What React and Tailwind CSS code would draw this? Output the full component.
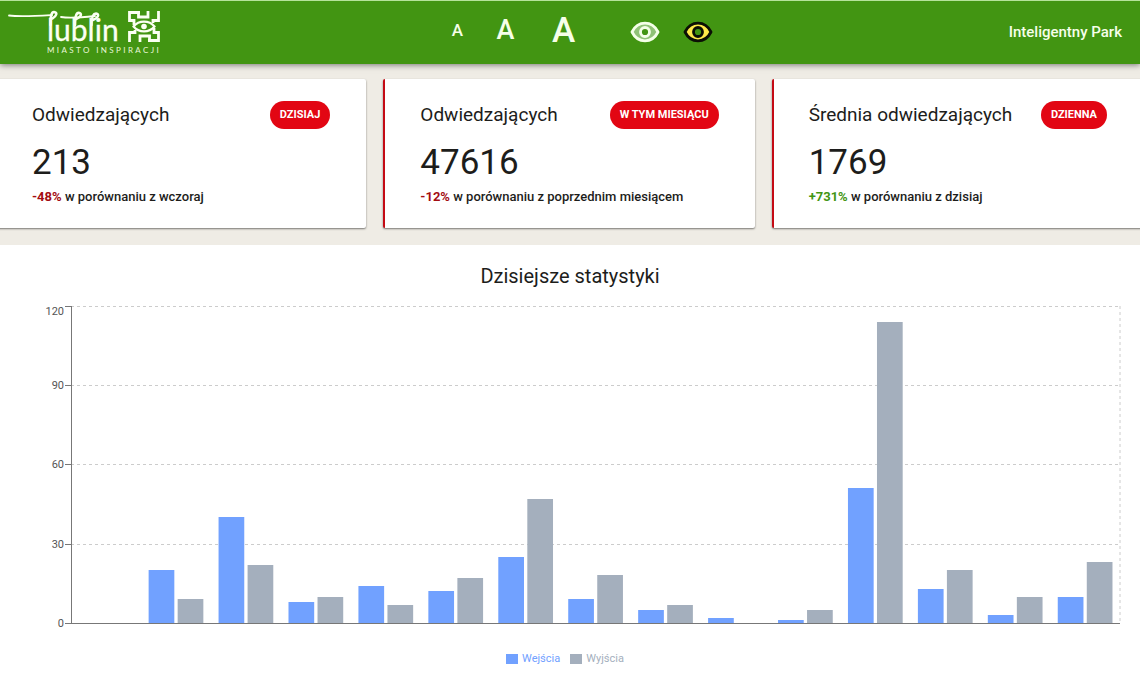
const cards = [
  {
    title: "Odwiedzających",
    badge: "DZISIAJ",
    value: "213",
    change: "-48%",
    changeColor: "text-[#a30d12]",
    compare: "w porównaniu z wczoraj",
  },
  {
    title: "Odwiedzających",
    badge: "W TYM MIESIĄCU",
    value: "47616",
    change: "-12%",
    changeColor: "text-[#a30d12]",
    compare: "w porównaniu z poprzednim miesiącem",
  },
  {
    title: "Średnia odwiedzających",
    badge: "DZIENNA",
    value: "1769",
    change: "+731%",
    changeColor: "text-[#429512]",
    compare: "w porównaniu z dzisiaj",
  },
];

// [wejścia, wyjścia]
const stats = [
  [0, 0],
  [20, 9],
  [40, 22],
  [8, 10],
  [14, 7],
  [12, 17],
  [25, 47],
  [9, 18],
  [5, 7],
  [2, 0],
  [1, 5],
  [51, 114],
  [13, 20],
  [3, 10],
  [10, 23],
];

const MAX = 120;
const PLOT_HEIGHT = 317;
const ticks = [0, 30, 60, 90, 120];

const toY = (value) => PLOT_HEIGHT - Math.round((value / MAX) * PLOT_HEIGHT);
const toX = (index) => `${(index / stats.length) * 100}%`;

function Logo() {
  return (
    <svg width="164" height="63" viewBox="0 0 164 63" fill="none" role="img" aria-label="Lublin Miasto Inspiracji">
      <g stroke="#fbfff2" strokeLinecap="round">
        <path d="M9 14.500C21 16 36 15 52 14" strokeWidth="1.800" />
        <path d="M50.500 24C50.500 16 51 11 54 11C58 11.500 56.500 15 52.500 17.500" strokeWidth="2.500" />
        <path d="M61 16C69 17.500 82 16.500 95 15" strokeWidth="1.800" />
        <path d="M75 24C75 15 76.500 11 79.500 12C82.500 13 80.500 16 76.500 18" strokeWidth="2.500" />
        <path d="M91.500 24C91.500 17 92.500 12.500 96 12.500C100 13 98 17 93 19" strokeWidth="2.500" />
      </g>
      <text x="47" y="40" fill="#fbfff2" stroke="#fbfff2" strokeWidth="0.300" className="font-['Lato',sans-serif] text-[30px]">lublin</text>
      <text x="47" y="52" fill="#e9f7d8" className="font-['Lato',sans-serif] text-[8px] tracking-[0.3em]">MIASTO INSPIRACJI</text>
      <g stroke="#fbfff2" strokeWidth="2.800">
        <path d="M140 11.500H129.500V19.500H134V24" />
        <path d="M138.500 11.500V16H148V10" />
        <path d="M158.500 10V19.500H153V22" />
        <path d="M148 39.500H158.500V31.500H154V27" />
        <path d="M149.500 39.500V35H140V41" />
        <path d="M129.500 41V31.500H135V29" />
        <path d="M133.500 25.500C139 19 149 19 154.500 25.500C149 32 139 32 133.500 25.500Z" strokeWidth="2.200" />
      </g>
      <circle cx="144" cy="25.500" r="2.800" fill="#fbfff2" />
    </svg>
  );
}

function EyeIcon({ line, fill, pupil }) {
  return (
    <svg width="30" height="22" viewBox="0 0 30 22" aria-hidden="true">
      <path
        d="M2 11C5 5 9.500 2.200 15 2.200C20.500 2.200 25 5 28 11C25 17 20.500 19.800 15 19.800C9.500 19.800 5 17 2 11Z"
        fill={fill}
        stroke={line}
        strokeWidth="2.800"
        strokeLinejoin="round"
      />
      <circle cx="15" cy="11" r="4.500" fill={pupil} stroke={line} strokeWidth="2.800" />
    </svg>
  );
}

function Header() {
  return (
    <header className="relative z-10 flex h-16 items-center justify-between border-t border-[#b5e39a] bg-[#429512] pr-[18px] text-[#f6ffe9] shadow-[0_1px_6px_rgba(0,0,0,0.5)]">
      <a href="#" className="flex-1">
        <Logo />
      </a>
      <div className="flex items-center pb-[2px] pl-6">
        <div className="flex items-center pb-[2px] leading-none font-medium">
          <button type="button" aria-label="Mała czcionka" className="w-12 text-[17px]">A</button>
          <button type="button" aria-label="Średnia czcionka" className="w-12 text-[27px]">A</button>
          <button type="button" aria-label="Duża czcionka" className="w-[68px] text-[35px]">A</button>
        </div>
        <div className="ml-8 flex items-center gap-[23px]">
          <button type="button" aria-label="Standardowy kontrast">
            <EyeIcon line="#f4ffe8" fill="#8fc276" pupil="#429512" />
          </button>
          <button type="button" aria-label="Wysoki kontrast">
            <EyeIcon line="#0b0f05" fill="#ffe94a" pupil="#429512" />
          </button>
        </div>
      </div>
      <p className="flex-1 text-right text-[15px] font-medium">Inteligentny Park</p>
    </header>
  );
}

function Card({ title, badge, value, change, changeColor, compare }) {
  return (
    <article className="rounded-xs border-l-2 border-[#c40a14] bg-white pt-[22px] pr-9 pb-5 pl-[35px] shadow-[0_1px_2px_rgba(0,0,0,0.5)]">
      <div className="flex items-center justify-between">
        <h2 className="text-[19px] leading-7">{title}</h2>
        <span className="rounded-full bg-[#e20613] px-[10px] text-[11px] leading-7 font-bold whitespace-nowrap text-white">{badge}</span>
      </div>
      <p className="mt-3 text-[35px] leading-[44px]">{value}</p>
      <p className="mt-px text-[13px] leading-[22px] font-medium whitespace-nowrap">
        <span className={`font-bold ${changeColor}`}>{change}</span> {compare}
      </p>
    </article>
  );
}

function Chart() {
  return (
    <div className="mt-4 flex pr-5">
      <svg width="71" height={PLOT_HEIGHT + 1} className="shrink-0 overflow-visible">
        {ticks.map((tick) => (
          <g key={tick}>
            <line x1="65" x2="71" y1={toY(tick) + 0.5} y2={toY(tick) + 0.5} stroke="#777" />
            <text x="64" y={toY(tick) + (tick === MAX ? 9 : 4)} textAnchor="end" fill="#555" className="text-[11px]">
              {tick}
            </text>
          </g>
        ))}
      </svg>
      <svg height={PLOT_HEIGHT + 1} className="min-w-0 flex-1 overflow-visible">
        {ticks.map((tick) => (
          <line key={tick} x1="0" x2="100%" y1={toY(tick) + 0.5} y2={toY(tick) + 0.5} stroke="#ccc" strokeDasharray="3 3" />
        ))}
        <line x1="100%" x2="100%" y1="0" y2={PLOT_HEIGHT} stroke="#ccc" strokeDasharray="3 3" />
        {stats.map(([entries, exits], i) => (
          <g key={i}>
            <rect x={toX(i + 0.11)} y={toY(entries)} width="2.45%" height={PLOT_HEIGHT - toY(entries)} fill="#71a1ff" />
            <rect x={toX(i + 0.525)} y={toY(exits)} width="2.45%" height={PLOT_HEIGHT - toY(exits)} fill="#a4afbd" />
          </g>
        ))}
        <line x1="0.5" x2="0.5" y1="0" y2={PLOT_HEIGHT} stroke="#777" />
        <line x1="0" x2="100%" y1={PLOT_HEIGHT + 0.5} y2={PLOT_HEIGHT + 0.5} stroke="#777" />
      </svg>
    </div>
  );
}

export default function App() {
  return (
    <div className="min-h-screen overflow-hidden bg-white font-['Roboto',sans-serif] text-[#1d1d1b]">
      <Header />
      <main>
        <section className="bg-[#efece5] pt-[15px] pb-[17px]">
          <div className="-mr-[3px] -ml-[5px] grid grid-cols-3 gap-[17px]">
            {cards.map((card) => (
              <Card key={card.badge} {...card} />
            ))}
          </div>
        </section>
        <section className="pt-[17px]">
          <h2 className="text-center text-[20px] leading-7">Dzisiejsze statystyki</h2>
          <Chart />
          <ul className="mt-[25px] flex justify-center gap-[10px] pr-[10px] pb-5 text-[11px] leading-5">
            <li className="flex items-center gap-1 text-[#71a1ff]">
              <span className="h-[10px] w-3 bg-[#71a1ff]" />
              Wejścia
            </li>
            <li className="flex items-center gap-1 text-[#a4afbd]">
              <span className="h-[10px] w-3 bg-[#a4afbd]" />
              Wyjścia
            </li>
          </ul>
        </section>
      </main>
    </div>
  );
}
